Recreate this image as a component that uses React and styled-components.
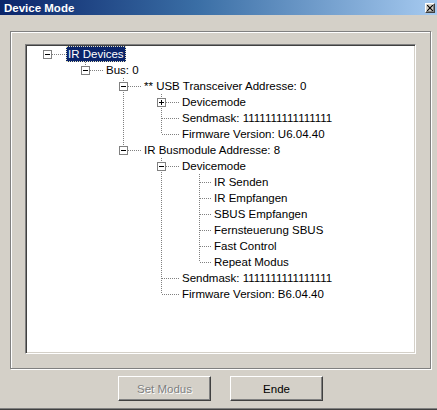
import React from 'react';
import styled, { createGlobalStyle } from 'styled-components';

const Global = createGlobalStyle`
  html, body { margin: 0; padding: 0; background: #d4d0c8; overflow: hidden; }
  * { box-sizing: border-box; }
`;

const Window = styled.div`
  width: 437px;
  height: 410px;
  display: flex;
  flex-direction: column;
  background: #d4d0c8;
  border-bottom: 1px solid #404040;
  box-shadow: inset 0 -1px 0 #808080;
  font-family: "Liberation Sans", Arial, sans-serif;
  font-size: 11px;
  color: #000;
`;

const TitleBar = styled.div`
  height: 15px;
  flex: none;
  display: flex;
  align-items: center;
  padding: 0 2px 0 4px;
  background: linear-gradient(to right, #0a246a 0%, #3a6ea5 45%, #a6caf0 100%);
`;

const TitleText = styled.span`
  color: #fff;
  font-weight: bold;
  font-size: 11.5px;
  white-space: nowrap;
`;

const CloseButton = styled.div`
  margin-left: auto;
  width: 10px;
  height: 10px;
  display: flex;
  align-items: center;
  justify-content: center;
  background: #d4d0c8;
  border-style: solid;
  border-width: 1px;
  border-color: #fff #404040 #404040 #fff;
  box-shadow: inset -1px -1px 0 #808080;
`;

const Body = styled.div`
  flex: 1;
  display: flex;
  flex-direction: column;
  padding: 16px 6px 0 10px;
`;

const Group = styled.div`
  height: 338px;
  display: flex;
  padding: 12px 14px 14px 14px;
  border: 1px solid #808080;
  box-shadow: inset 1px 1px 0 #fff, 1px 1px 0 #fff;
`;

const Tree = styled.div`
  flex: 1;
  background: #fff;
  border-style: solid;
  border-width: 1px;
  border-color: #808080 #fff #fff #808080;
  box-shadow: inset 1px 1px 0 #404040, inset -1px -1px 0 #d4d0c8;
  padding: 1px;
  overflow: hidden;
`;

const Row = styled.div`
  height: 16px;
  display: flex;
  align-items: stretch;
`;

const CellSvg = styled.svg`
  flex: none;
  display: block;
`;

const Label = styled.span`
  height: 16px;
  line-height: 16px;
  margin-left: 1px;
  padding: 0 2px;
  font-size: 11.5px;
  white-space: nowrap;
  background: ${(p) => (p.$selected ? '#0a246a' : 'transparent')};
  color: ${(p) => (p.$selected ? '#fff' : '#000')};
  outline: ${(p) => (p.$selected ? '1px dotted #e8e4c0' : 'none')};
  outline-offset: -1px;
`;

const ButtonRow = styled.div`
  display: flex;
  justify-content: center;
  gap: 19px;
  margin-top: 7px;
`;

const Button = styled.div`
  width: 93px;
  height: 25px;
  display: flex;
  align-items: center;
  justify-content: center;
  background: #d4d0c8;
  border-style: solid;
  border-width: 1px;
  border-color: #fff #404040 #404040 #fff;
  box-shadow: inset -1px -1px 0 #808080;
  font-size: 11.5px;
  color: ${(p) => (p.$disabled ? '#808080' : '#000')};
  text-shadow: ${(p) => (p.$disabled ? '1px 1px 0 #fff' : 'none')};
`;

const DOT = { stroke: '#808080', strokeWidth: 1, strokeDasharray: '1 1', shapeRendering: 'crispEdges' };

function Guide({ line }) {
  return (
    <CellSvg width={38} height={16} viewBox="0 0 38 16">
      {line && <line x1="20.5" y1="0" x2="20.5" y2="16" {...DOT} />}
    </CellSvg>
  );
}

function Connector({ w, top, bottom, box, expanded }) {
  return (
    <CellSvg width={w} height={16} viewBox={`0 0 ${w} 16`}>
      {top && <line x1="20.5" y1="0" x2="20.5" y2="8" {...DOT} />}
      {bottom && <line x1="20.5" y1="8" x2="20.5" y2="16" {...DOT} />}
      <line x1="21" y1="8.5" x2={w} y2="8.5" {...DOT} />
      {box && (
        <g shapeRendering="crispEdges">
          <rect x="16.5" y="4.5" width="8" height="8" fill="#fff" stroke="#808080" />
          <line x1="18" y1="8.5" x2="23" y2="8.5" stroke="#000" />
          {!expanded && <line x1="20.5" y1="6" x2="20.5" y2="11" stroke="#000" />}
        </g>
      )}
    </CellSvg>
  );
}

const leaf = (label) => ({ label });

const data = [
  {
    label: 'IR Devices',
    selected: true,
    expanded: true,
    children: [
      {
        label: 'Bus: 0',
        expanded: true,
        children: [
          {
            label: '** USB Transceiver Addresse: 0',
            expanded: true,
            children: [
              { label: 'Devicemode', children: [leaf('IR Senden')], expanded: false },
              leaf('Sendmask: 1111111111111111'),
              leaf('Firmware Version: U6.04.40'),
            ],
          },
          {
            label: 'IR Busmodule Addresse: 8',
            expanded: true,
            children: [
              {
                label: 'Devicemode',
                expanded: true,
                children: [
                  leaf('IR Senden'),
                  leaf('IR Empfangen'),
                  leaf('SBUS Empfangen'),
                  leaf('Fernsteuerung SBUS'),
                  leaf('Fast Control'),
                  leaf('Repeat Modus'),
                ],
              },
              leaf('Sendmask: 1111111111111111'),
              leaf('Firmware Version: B6.04.40'),
            ],
          },
        ],
      },
    ],
  },
];

function flatten(nodes, depth = 0, guides = []) {
  const out = [];
  nodes.forEach((n, i) => {
    const first = i === 0;
    const last = i === nodes.length - 1;
    out.push({ ...n, depth, guides, first, last });
    if (n.children && n.expanded) {
      out.push(...flatten(n.children, depth + 1, [...guides, !last]));
    }
  });
  return out;
}

const rows = flatten(data);

export default function App() {
  return (
    <>
      <Global />
      <Window>
        <TitleBar>
          <TitleText>Device Mode</TitleText>
          <CloseButton>
            <svg width="6" height="6" viewBox="0 0 6 6">
              <path d="M0 0L6 6M6 0L0 6" stroke="#000" strokeWidth="1.2" />
            </svg>
          </CloseButton>
        </TitleBar>
        <Body>
          <Group>
            <Tree>
              {rows.map((r, idx) => (
                <Row key={idx}>
                  {r.guides.map((g, gi) => (
                    <Guide key={gi} line={g} />
                  ))}
                  <Connector
                    w={r.depth >= 4 ? 32 : 38}
                    top={r.depth > 0 || !r.first}
                    bottom={!r.last}
                    box={!!r.children}
                    expanded={r.expanded}
                  />
                  <Label $selected={r.selected}>{r.label}</Label>
                </Row>
              ))}
            </Tree>
          </Group>
          <ButtonRow>
            <Button $disabled>Set Modus</Button>
            <Button>Ende</Button>
          </ButtonRow>
        </Body>
      </Window>
    </>
  );
}
